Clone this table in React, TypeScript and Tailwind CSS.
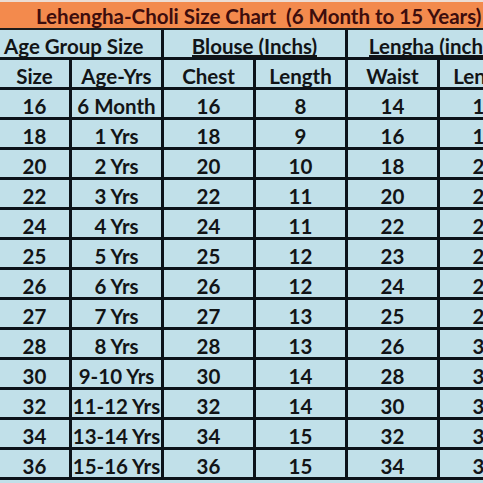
import React from 'react';

const rows: [string, string, string, string, string, string][] = [
  ['16', '6 Month', '16', '8', '14', '15'],
  ['18', '1 Yrs', '18', '9', '16', '17'],
  ['20', '2 Yrs', '20', '10', '18', '20'],
  ['22', '3 Yrs', '22', '11', '20', '22'],
  ['24', '4 Yrs', '24', '11', '22', '24'],
  ['25', '5 Yrs', '25', '12', '23', '26'],
  ['26', '6 Yrs', '26', '12', '24', '28'],
  ['27', '7 Yrs', '27', '13', '25', '29'],
  ['28', '8 Yrs', '28', '13', '26', '30'],
  ['30', '9-10 Yrs', '30', '14', '28', '32'],
  ['32', '11-12 Yrs', '32', '14', '30', '34'],
  ['34', '13-14 Yrs', '34', '15', '32', '36'],
  ['36', '15-16 Yrs', '36', '15', '34', '38'],
];

const cols = 'grid grid-cols-[72px_92px_92px_92px_92px_92px]';
const row = 'h-[30px] border-b-[3px] border-[#0c1319] text-[20.5px] font-bold';
const cell = 'border-r-[3px] border-[#0c1319] flex items-start justify-center pt-[6px] leading-none whitespace-nowrap';

// underlined group heading; the bar sits just above the row line
const Underlined: React.FC<{ children: React.ReactNode }> = ({ children }) => (
  <span className="relative">
    {children}
    <span className="absolute left-0 right-0 top-[19px] h-[2px] bg-[#121416]" />
  </span>
);

const App: React.FC = () => {
  return (
    <div
      className="w-[483px] h-[483px] overflow-hidden bg-[#c1e0e9] text-[#121416]"
      style={{ fontFamily: 'Lato, "Open Sans", sans-serif' }}
    >
      <div className="w-[532px]">
        {/* Title */}
        <div className="h-[2px] bg-[#ecdcd3]" />
        <div className="h-[28px] bg-[#f38a4d] border-b-2 border-[#1b1b1b] flex items-center pl-[36px] pt-[2px] text-[20.5px] font-bold text-[#3d0d0d] whitespace-pre leading-none">
          Lehengha-Choli Size Chart  (6 Month to 15 Years)
        </div>

        {/* Group headers */}
        <div className={`grid grid-cols-[164px_184px_184px] ${row}`}>
          <div className="border-r-[3px] border-[#0c1319] flex items-start pl-[4px] pt-[6px] leading-none whitespace-nowrap">
            Age Group Size
          </div>
          <div className={cell}>
            <Underlined>Blouse (Inchs)</Underlined>
          </div>
          <div className={cell}>
            <Underlined>Lengha (inches)</Underlined>
          </div>
        </div>

        {/* Sub headers */}
        <div className={`${cols} ${row}`}>
          {['Size', 'Age-Yrs', 'Chest', 'Length', 'Waist', 'Length'].map((h, i) => (
            <div key={i} className={cell}>
              {h}
            </div>
          ))}
        </div>

        {/* Data */}
        {rows.map((r, ri) => (
          <div key={ri} className={`${cols} ${row}`}>
            {r.map((c, ci) => (
              <div key={ci} className={cell}>
                {c}
              </div>
            ))}
          </div>
        ))}
      </div>
    </div>
  );
};

export default App;
